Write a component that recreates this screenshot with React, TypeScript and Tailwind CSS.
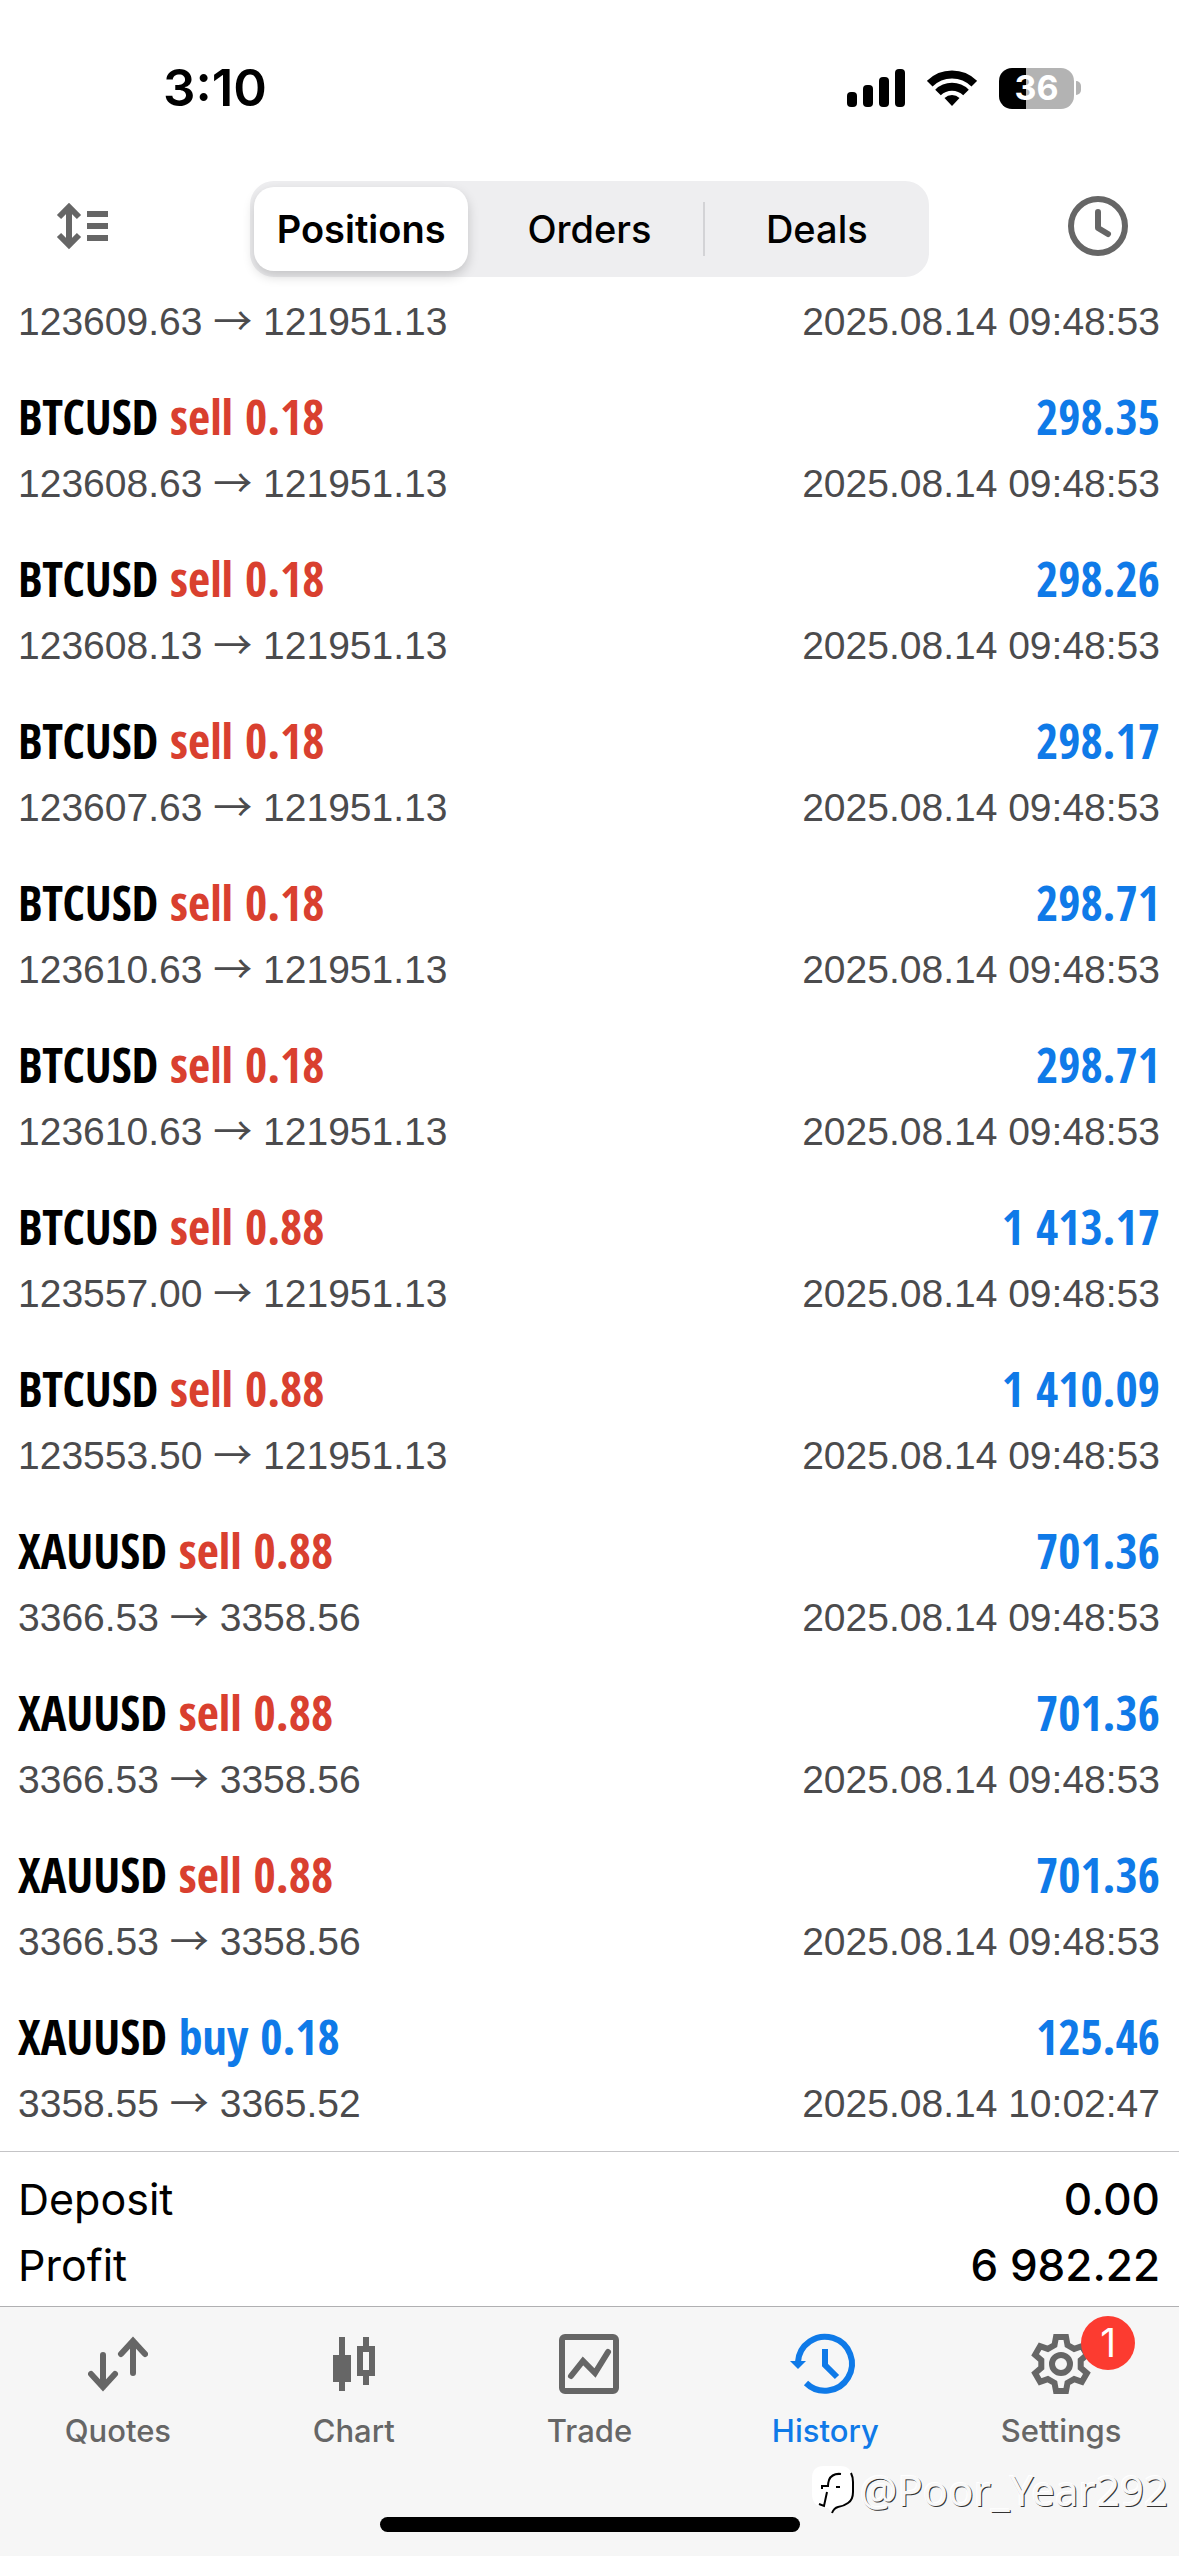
import type { ReactNode } from "react"

interface Position {
    symbol?: string // the top row is scrolled under the header, only its prices show
    side?: "buy" | "sell"
    volume?: string
    profit?: string
    open: string
    close: string
    time: string
}

interface Tab {
    name: string
    icon: ReactNode
    active?: boolean
    badge?: number
}

const positions: Position[] = [
    { open: "123609.63", close: "121951.13", time: "2025.08.14 09:48:53" },
    { symbol: "BTCUSD", side: "sell", volume: "0.18", profit: "298.35", open: "123608.63", close: "121951.13", time: "2025.08.14 09:48:53" },
    { symbol: "BTCUSD", side: "sell", volume: "0.18", profit: "298.26", open: "123608.13", close: "121951.13", time: "2025.08.14 09:48:53" },
    { symbol: "BTCUSD", side: "sell", volume: "0.18", profit: "298.17", open: "123607.63", close: "121951.13", time: "2025.08.14 09:48:53" },
    { symbol: "BTCUSD", side: "sell", volume: "0.18", profit: "298.71", open: "123610.63", close: "121951.13", time: "2025.08.14 09:48:53" },
    { symbol: "BTCUSD", side: "sell", volume: "0.18", profit: "298.71", open: "123610.63", close: "121951.13", time: "2025.08.14 09:48:53" },
    { symbol: "BTCUSD", side: "sell", volume: "0.88", profit: "1 413.17", open: "123557.00", close: "121951.13", time: "2025.08.14 09:48:53" },
    { symbol: "BTCUSD", side: "sell", volume: "0.88", profit: "1 410.09", open: "123553.50", close: "121951.13", time: "2025.08.14 09:48:53" },
    { symbol: "XAUUSD", side: "sell", volume: "0.88", profit: "701.36", open: "3366.53", close: "3358.56", time: "2025.08.14 09:48:53" },
    { symbol: "XAUUSD", side: "sell", volume: "0.88", profit: "701.36", open: "3366.53", close: "3358.56", time: "2025.08.14 09:48:53" },
    { symbol: "XAUUSD", side: "sell", volume: "0.88", profit: "701.36", open: "3366.53", close: "3358.56", time: "2025.08.14 09:48:53" },
    { symbol: "XAUUSD", side: "buy", volume: "0.18", profit: "125.46", open: "3358.55", close: "3365.52", time: "2025.08.14 10:02:47" },
]

const tabs: Tab[] = [
    { name: "Quotes", icon: <QuotesIcon /> },
    { name: "Chart", icon: <ChartIcon /> },
    { name: "Trade", icon: <TradeIcon /> },
    { name: "History", icon: <HistoryIcon />, active: true },
    { name: "Settings", icon: <GearIcon />, badge: 1 },
]

function QuotesIcon() {
    return (
        <svg viewBox="0 0 60 60" className="size-[60px]" fill="none" stroke="currentColor" strokeWidth="6" strokeLinecap="round">
            <path d="M15 21v32M3 40l12 13 12-13" />
            <path d="M45 39V7M33 20L45 7l12 13" />
        </svg>
    )
}

function ChartIcon() {
    return (
        <svg viewBox="0 0 60 60" className="size-[60px]" fill="currentColor">
            <path d="M15 3h6v18h6v27h-6v9h-6v-9H9V21h6z" />
            <path fillRule="evenodd" d="M39 3h6v9h6v30h-6v9h-6v-9h-6V12h6zM39 18v18h6V18z" />
        </svg>
    )
}

function TradeIcon() {
    return (
        <svg viewBox="0 0 60 60" className="size-[60px]" fill="none" stroke="currentColor" strokeWidth="6">
            <rect x="3" y="3" width="54" height="54" rx="3" />
            <path d="M12 42l12-15 12 12 13-21" strokeLinecap="round" />
        </svg>
    )
}

function HistoryIcon() {
    return (
        <svg viewBox="0 0 60 60" className="size-[60px] overflow-visible" fill="none" stroke="currentColor" strokeWidth="6">
            <path d="M3 28a27 27 0 1 1 8 21" />
            <path d="M30 15v16l12 12" />
            <path d="M-5 27h16l-8 8z" fill="currentColor" stroke="none" />
        </svg>
    )
}

function GearIcon() {
    return (
        <svg viewBox="-30 -30 60 60" className="size-[60px]" fill="none" stroke="currentColor" strokeWidth="6">
            <path d="M-6.5-19L-5-27H5L6.5-19 13.2-15.1 20.9-17.8 25.9-9.2 19.7-3.9V3.9L25.9 9.2 20.9 17.8 13.2 15.1 6.5 19 5 27H-5L-6.5 19-13.2 15.1-20.9 17.8-25.9 9.2-19.7 3.9V-3.9L-25.9-9.2-20.9-17.8-13.2-15.1z" />
            <circle r="9" />
        </svg>
    )
}

function StatusBar() {
    return (
        <div className="flex h-[118px] items-center justify-between pt-[58px] pr-[98px] pl-[163px]">
            <span className="text-[51px] leading-[60px] font-semibold">3:10</span>
            <div className="flex items-center">
                <svg viewBox="0 0 58 38" className="mr-[22px] h-[38px] w-[58px]">
                    <rect y="23" width="10" height="15" rx="4" />
                    <rect x="16" y="16" width="10" height="22" rx="4" />
                    <rect x="32" y="8" width="10" height="30" rx="4" />
                    <rect x="48" width="10" height="38" rx="4" />
                </svg>
                <svg viewBox="0 0 50 38" className="mr-[22px] h-[38px] w-[50px]" fill="none" stroke="#000" strokeWidth="8">
                    <path d="M2.7 14.7a31.5 31.5 0 0 1 44.6 0" />
                    <path d="M11 23.5a20 20 0 0 1 28 0" />
                    <path d="M25 37l-7.5-8a11 11 0 0 1 15 0z" fill="#000" stroke="none" />
                </svg>
                <div className="flex h-[41px] w-[75px] items-center justify-center rounded-[13px] bg-[linear-gradient(to_right,#000_36%,#b3b3b3_36%)] text-[34px] leading-none font-bold text-white">
                    36
                </div>
                <div className="ml-0.5 h-[14px] w-[5px] rounded-r-full bg-[#b3b3b3]" />
            </div>
        </div>
    )
}

function Header() {
    return (
        <header className="flex items-center px-[51px] pt-[63px] pb-5 text-[38px]">
            <button type="button" aria-label="Sort" className="pb-1.5 text-[#666]">
                <svg viewBox="0 0 60 60" className="size-[60px]" fill="none" stroke="currentColor" strokeWidth="6">
                    <path d="M18 12v36M8 21l10-10 10 10M8 39l10 10 10-10" />
                    <path d="M36 18h21M36 30h21M36 42h21" />
                </svg>
            </button>
            <div role="tablist" className="mx-[139px] grid h-24 flex-1 grid-cols-3 rounded-3xl bg-[#eeeef0]">
                <div className="py-1.5 pr-2 pl-1">
                    <button type="button" role="tab" aria-selected="true" className="size-full rounded-[20px] bg-white font-semibold shadow-[0_5px_12px_rgba(0,0,0,0.18)]">
                        Positions
                    </button>
                </div>
                <button type="button" role="tab" aria-selected="false" className="font-medium">Orders</button>
                <div className="flex items-center">
                    <div className="h-[54px] w-0.5 bg-[#d3d3d6]" />
                    <button type="button" role="tab" aria-selected="false" className="h-full flex-1 font-medium">Deals</button>
                </div>
            </div>
            <button type="button" aria-label="Period" className="pb-1.5 text-[#666]">
                <svg viewBox="0 0 60 60" className="size-[60px]" fill="none" stroke="currentColor" strokeWidth="6" strokeLinecap="round" strokeLinejoin="round">
                    <circle cx="30" cy="30" r="27" />
                    <path d="M30 16v16l10 6" />
                </svg>
            </button>
        </header>
    )
}

function PositionRow({ position }: { position: Position }) {
    return (
        <li className="pb-[38px]">
            {position.symbol && (
                <div className="mb-2.5 flex justify-between font-['Open_Sans_Condensed','Open_Sans',sans-serif] text-[48px] leading-[64px] font-bold">
                    <span>
                        {position.symbol}{" "}
                        <span className={position.side === "sell" ? "text-[#d9402f]" : "text-[#0f7ae8]"}>
                            {position.side} {position.volume}
                        </span>
                    </span>
                    <span className="text-[#0f7ae8]">{position.profit}</span>
                </div>
            )}
            <div className="flex justify-between font-['Liberation_Sans',sans-serif] text-[39px] leading-[50px] text-[#4b4b4d]">
                <span>
                    {position.open} <span className="font-['Noto_Sans_CJK_SC',sans-serif] leading-none">→</span> {position.close}
                </span>
                <span>{position.time}</span>
            </div>
        </li>
    )
}

function Summary() {
    return (
        <dl className="border-t border-[#c4c4c6] pt-3.5 pr-[19px] pb-2 pl-[18px] leading-[66px]">
            <div className="flex justify-between">
                <dt className="text-[43px]">Deposit</dt>
                <dd className="text-[44px] font-medium">0.00</dd>
            </div>
            <div className="flex justify-between">
                <dt className="text-[43px]">Profit</dt>
                <dd className="text-[44px] font-medium">6 982.22</dd>
            </div>
        </dl>
    )
}

function Watermark() {
    return (
        <div className="absolute right-[11px] bottom-9 flex items-center gap-1.5">
            <svg viewBox="0 0 42 48" className="h-12 w-[42px]" fill="none" stroke="#000">
                <path d="M12 0h16q12 0 12 12v16q0 10-11 12-7 1-9 7l-4-5Q0 42 0 28V12Q0 0 12 0z" fill="#fff" stroke="none" />
                <path d="M39 7q2 4 2 9v10q0 8-5 11-4 3-10 4-4 1-6 6" strokeWidth="2" />
                <path d="M29 8q-9-1-12 6-1 3-1 6h-6v3" strokeWidth="2" />
                <path d="M15 26l-3 14-5-2M24 21h4" strokeWidth="2" />
            </svg>
            <span className="font-['Noto_Sans',sans-serif] text-[42px] leading-[60px] text-[#f8f8f8] [text-shadow:1px_1px_0_#333,-1px_-1px_0_#fff]">
                @Poor_Year292
            </span>
        </div>
    )
}

function TabBar() {
    return (
        <div className="relative border-t border-[#b0b0b2] bg-[#f6f6f6] pb-6">
            <nav className="grid grid-cols-5 pt-[27px]">
                {tabs.map((tab) => (
                    <a
                        key={tab.name}
                        href="#"
                        className={`flex flex-col items-center gap-[17px] text-[31px] leading-10 font-medium ${tab.active ? "text-[#0f7ae8]" : "text-[#666]"}`}
                    >
                        <span className="relative">
                            {tab.icon}
                            {tab.badge && (
                                <span className="absolute -top-[18px] left-[50px] flex size-[54px] items-center justify-center rounded-full bg-[#fc3b30] text-[39px] font-normal text-white">
                                    {tab.badge}
                                </span>
                            )}
                        </span>
                        {tab.name}
                    </a>
                ))}
            </nav>
            <div className="mx-auto mt-[66px] h-[15px] w-[420px] rounded-full bg-black" />
            <Watermark />
        </div>
    )
}

export default function App() {
    return (
        <div className="flex min-h-screen flex-col bg-white font-['Inter',sans-serif] text-black">
            <StatusBar />
            <Header />
            <ul className="-mb-6 flex-1 pr-[19px] pl-[18px]">
                {positions.map((position, index) => (
                    <PositionRow key={index} position={position} />
                ))}
            </ul>
            <Summary />
            <TabBar />
        </div>
    )
}
